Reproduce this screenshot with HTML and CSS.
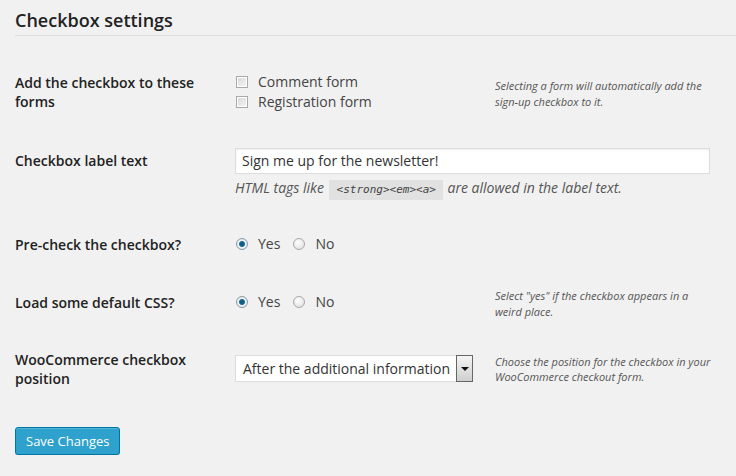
FILE: index.html
```html
<!DOCTYPE html>
<html lang="en">
<head>
<meta charset="utf-8">
<title>Checkbox settings</title>
<link rel="stylesheet" href="styles.css">
</head>
<body>
<div class="wrap">
  <h3 class="title">Checkbox settings</h3>
  <form class="form">
    <div class="row row-forms">
      <div class="th">Add the checkbox to these forms</div>
      <div class="td">
        <label class="opt"><span class="check"></span>Comment form</label>
        <label class="opt"><span class="check"></span>Registration form</label>
      </div>
      <div class="desc">Selecting a form will automatically add the<br>sign-up checkbox to it.</div>
    </div>

    <div class="row row-text">
      <div class="th">Checkbox label text</div>
      <div class="td wide">
        <div class="input">Sign me up for the newsletter!</div>
        <p class="help">HTML tags like <code>&lt;strong&gt;&lt;em&gt;&lt;a&gt;</code> are allowed in the label text.</p>
      </div>
    </div>

    <div class="row">
      <div class="th">Pre-check the checkbox?</div>
      <div class="td">
        <div class="radios">
          <label class="opt"><span class="radio on"></span>Yes</label>
          <label class="opt"><span class="radio"></span>No</label>
        </div>
      </div>
      <div class="desc"></div>
    </div>

    <div class="row row-css">
      <div class="th">Load some default CSS?</div>
      <div class="td">
        <div class="radios">
          <label class="opt"><span class="radio on"></span>Yes</label>
          <label class="opt"><span class="radio"></span>No</label>
        </div>
      </div>
      <div class="desc">Select "yes" if the checkbox appears in a<br>weird place.</div>
    </div>

    <div class="row row-woo">
      <div class="th">WooCommerce checkbox position</div>
      <div class="td">
        <div class="select">
          <span class="select-text">After the additional information</span>
          <span class="select-btn"><span class="tri"></span></span>
        </div>
      </div>
      <div class="desc">Choose the position for the checkbox in your<br>WooCommerce checkout form.</div>
    </div>

    <div class="submit">
      <button type="button" class="button">Save Changes</button>
    </div>
  </form>
</div>
</body>
</html>
```

FILE: styles.css
```css
* { box-sizing: border-box; }

html, body {
  margin: 0;
  background: #f1f1f1;
}

body {
  font-family: "Open Sans", "Noto Sans", sans-serif;
  font-size: 14px;
  color: #444;
}

.wrap {
  padding-left: 15px;
}

.title {
  margin: 0;
  padding: 8px 0 3px;
  font-size: 18px;
  line-height: 24px;
  font-weight: 600;
  color: #222;
  border-bottom: 1px solid #dcdcdc;
}

.form {
  margin: 17px 0 0;
}

.row {
  display: grid;
  grid-template-columns: 210px 260px 1fr;
}

.th {
  align-self: start;
  padding: 20px 10px 19px 0;
  font-weight: 600;
  line-height: 19px;
  color: #222;
}

.row-forms .th {
  padding-bottom: 20px;
}

.row-css .th {
  padding-bottom: 18px;
}

.td {
  align-self: center;
  padding: 15px 10px;
  display: flex;
  flex-direction: column;
}

.td.wide {
  grid-column: 2 / 4;
  padding-top: 17px;
  padding-bottom: 15px;
}

.desc {
  align-self: center;
  padding: 4px 0 0 10px;
  font-size: 11px;
  line-height: 16px;
  font-style: italic;
  color: #555;
  white-space: nowrap;
}

.row-woo .desc {
  padding-top: 0;
  line-height: 15px;
}

.opt {
  display: flex;
  align-items: center;
  gap: 10px;
  line-height: 20px;
  color: #444;
}

.check {
  width: 12px;
  height: 12px;
  margin-left: 1px;
  border: 1px solid #a9a9a9;
  background: linear-gradient(135deg, #d8d8d8, #f6f6f6);
  box-shadow: inset 0 0 0 1px #fff;
}

.radios {
  display: flex;
  gap: 12px;
}

.radio {
  width: 12px;
  height: 12px;
  margin-left: 1px;
  border-radius: 50%;
  border: 1px solid #a8a8a8;
  background: radial-gradient(circle at 40% 35%, #fdfdfd, #dcdcdc);
}

.radio.on {
  border-color: #8a9aa8;
  background: radial-gradient(circle at 50% 50%, #0e4f73 0, #1b6a94 2.5px, #f2f4f6 3.5px, #dde1e4 6px);
}

.input {
  width: 475px;
  height: 26px;
  padding: 0 6px;
  line-height: 24px;
  background: #fff;
  border: 1px solid #ddd;
  box-shadow: inset 0 1px 2px rgba(0, 0, 0, 0.07);
  color: #333;
}

.help {
  margin: 4px 0 0;
  font-size: 14px;
  line-height: 20px;
  font-style: italic;
  color: #555;
}

code {
  display: inline-block;
  padding: 0 7px 0 8px;
  margin: 0 1px;
  font-family: "DejaVu Sans Mono", "Liberation Mono", monospace;
  font-size: 11px;
  line-height: 20px;
  font-style: italic;
  background: #e1e1e1;
  color: #444;
}

.select {
  display: flex;
  width: 238px;
  height: 27px;
  background: #fff;
  border: 1px solid #ddd;
  align-items: stretch;
}

.select-text {
  flex: 1;
  padding-left: 7px;
  line-height: 25px;
  color: #333;
  white-space: nowrap;
  overflow: hidden;
}

.select-btn {
  width: 17px;
  margin: -1px -1px -1px 0;
  border: 1px solid #666;
  background: linear-gradient(#f4f4f4, #cfcfcf);
  display: flex;
  align-items: center;
  justify-content: center;
}

.tri {
  width: 0;
  height: 0;
  border-left: 4px solid transparent;
  border-right: 4px solid transparent;
  border-top: 4px solid #111;
}

.submit {
  margin-top: 20px;
}

.button {
  height: 28px;
  padding: 0 10px;
  font-family: "Open Sans", "Noto Sans", sans-serif;
  font-size: 13px;
  line-height: 26px;
  color: #fff;
  background: #2ea2cc;
  border: 1px solid #0074a2;
  border-radius: 3px;
  box-shadow: inset 0 1px 0 rgba(120, 200, 230, 0.5), 0 1px 0 rgba(0, 0, 0, 0.15);
  cursor: pointer;
}
```
